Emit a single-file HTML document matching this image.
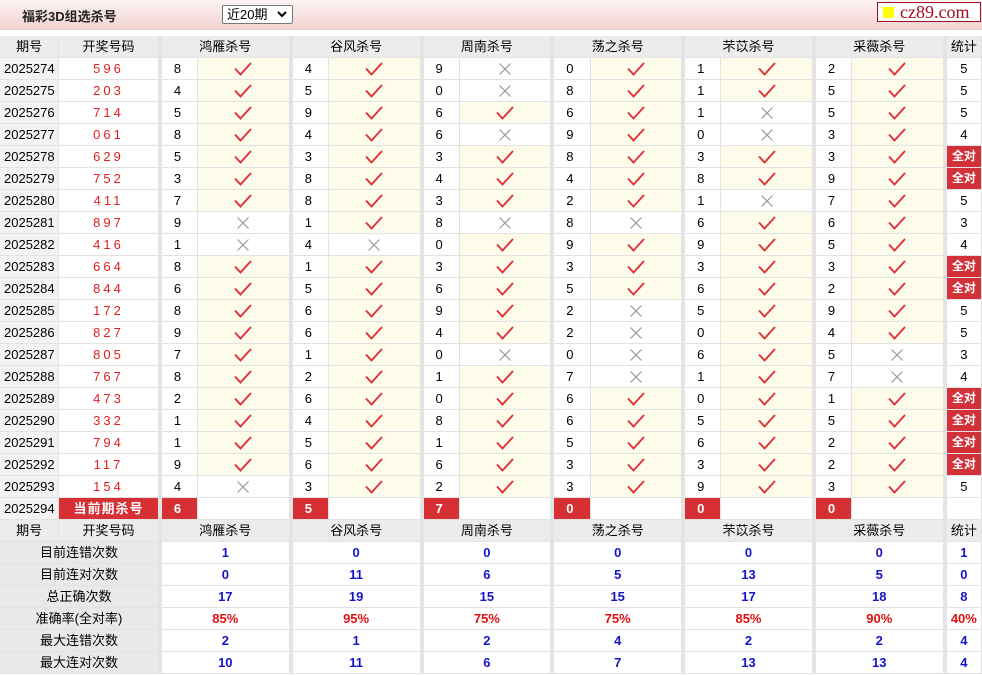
<!DOCTYPE html>
<html><head><meta charset="utf-8">
<style>
*{margin:0;padding:0;box-sizing:border-box}
body{width:982px;height:675px;background:#fff;font-family:"Liberation Sans","Noto Sans CJK SC",sans-serif;font-size:13px;color:#000;position:relative;overflow:hidden}
.top{position:absolute;left:0;top:0;width:982px;height:30px;background:linear-gradient(#fdf4f4,#f3d2d2);border-bottom:1px solid #eccaca}
.title{position:absolute;left:22px;top:6px;font-size:13px;font-weight:bold;color:#222}
.sel{position:absolute;left:222px;top:5px;width:71px;height:19px;border:1px solid #777;background:#fff;font-size:13px;padding-left:4px;line-height:17px;border-radius:2px}
.sel svg{position:absolute;right:5px;top:5px}
.logo{position:absolute;left:877px;top:2px;width:104px;height:20px;border:1px solid #a01020;background:#fff;font-family:"Liberation Serif",serif;font-size:18px;color:#a01020;line-height:18px;padding-left:22px}
.logo i{position:absolute;left:5px;top:4px;width:11px;height:11px;background:#ff0}
table{position:absolute;left:0;top:36px;border-collapse:separate;border-spacing:0;table-layout:fixed;width:982px}
td{height:22px;border-right:1px solid #e2e2e2;border-bottom:1px solid #e2e2e2;text-align:center;padding:0;white-space:nowrap;overflow:hidden;line-height:21px;vertical-align:middle}
td svg{display:block;margin:0 auto}
td.g{border-right:4px solid #e4e4e4}
.h td{background:#ececec}
td.id{background:#f3f3f3;text-align:left;padding-left:4px}
td.dr{color:#e02020;letter-spacing:3px}
td.n{text-align:left;padding-left:12px}
td.c{background:#fdfbea}
td.all{background:#d3313a;color:#fff;font-weight:bold;font-size:12px}
td.red{background:#d63034;color:#fff;font-weight:bold;text-align:left;padding-left:12px}
td.cur{background:#d63034;color:#fff;font-weight:bold;letter-spacing:1px}
td.lb{background:#e9e9e9}
td.b{color:#1515c8;font-weight:bold}
td.r{color:#e01010;font-weight:bold}
</style></head><body>
<div class="top"><div class="title">福彩3D组选杀号</div><div class="sel">近20期<svg width="10" height="7" viewBox="0 0 10 7"><path d="M1 1L5 5L9 1" stroke="#000" stroke-width="2" fill="none"/></svg></div><div class="logo"><i></i>cz89.com</div></div>
<svg width="0" height="0" style="position:absolute"><defs>
<symbol id="k" viewBox="0 0 18 14"><path d="M1 6.5L6.5 12.5L17 1" stroke="#e0303a" stroke-width="1.9" fill="none"/></symbol>
<symbol id="x" viewBox="0 0 14 14"><path d="M1.5 1.5L12.5 12.5M12.5 1.5L1.5 12.5" stroke="#9a9a9a" stroke-width="1.2" fill="none"/></symbol>
</defs></svg>
<table>
<colgroup><col style="width:57px"><col style="width:99px"><col style="width:35px"><col style="width:91px"><col style="width:35px"><col style="width:91px"><col style="width:35px"><col style="width:91px"><col style="width:35px"><col style="width:91px"><col style="width:35px"><col style="width:91px"><col style="width:35px"><col style="width:91px"><col style="width:34px"></colgroup>
<tr class="h"><td>期号</td><td class="g">开奖号码</td><td colspan="2" class="g">鸿雁杀号</td><td colspan="2" class="g">谷风杀号</td><td colspan="2" class="g">周南杀号</td><td colspan="2" class="g">荡之杀号</td><td colspan="2" class="g">芣苡杀号</td><td colspan="2" class="g">采薇杀号</td><td>统计</td></tr>
<tr><td class="id">2025274</td><td class="dr g">596</td><td class="n">8</td><td class="c g"><svg width="18" height="14"><use href="#k"/></svg></td><td class="n">4</td><td class="c g"><svg width="18" height="14"><use href="#k"/></svg></td><td class="n">9</td><td class="g"><svg width="14" height="14"><use href="#x"/></svg></td><td class="n">0</td><td class="c g"><svg width="18" height="14"><use href="#k"/></svg></td><td class="n">1</td><td class="c g"><svg width="18" height="14"><use href="#k"/></svg></td><td class="n">2</td><td class="c g"><svg width="18" height="14"><use href="#k"/></svg></td><td>5</td></tr>
<tr><td class="id">2025275</td><td class="dr g">203</td><td class="n">4</td><td class="c g"><svg width="18" height="14"><use href="#k"/></svg></td><td class="n">5</td><td class="c g"><svg width="18" height="14"><use href="#k"/></svg></td><td class="n">0</td><td class="g"><svg width="14" height="14"><use href="#x"/></svg></td><td class="n">8</td><td class="c g"><svg width="18" height="14"><use href="#k"/></svg></td><td class="n">1</td><td class="c g"><svg width="18" height="14"><use href="#k"/></svg></td><td class="n">5</td><td class="c g"><svg width="18" height="14"><use href="#k"/></svg></td><td>5</td></tr>
<tr><td class="id">2025276</td><td class="dr g">714</td><td class="n">5</td><td class="c g"><svg width="18" height="14"><use href="#k"/></svg></td><td class="n">9</td><td class="c g"><svg width="18" height="14"><use href="#k"/></svg></td><td class="n">6</td><td class="c g"><svg width="18" height="14"><use href="#k"/></svg></td><td class="n">6</td><td class="c g"><svg width="18" height="14"><use href="#k"/></svg></td><td class="n">1</td><td class="g"><svg width="14" height="14"><use href="#x"/></svg></td><td class="n">5</td><td class="c g"><svg width="18" height="14"><use href="#k"/></svg></td><td>5</td></tr>
<tr><td class="id">2025277</td><td class="dr g">061</td><td class="n">8</td><td class="c g"><svg width="18" height="14"><use href="#k"/></svg></td><td class="n">4</td><td class="c g"><svg width="18" height="14"><use href="#k"/></svg></td><td class="n">6</td><td class="g"><svg width="14" height="14"><use href="#x"/></svg></td><td class="n">9</td><td class="c g"><svg width="18" height="14"><use href="#k"/></svg></td><td class="n">0</td><td class="g"><svg width="14" height="14"><use href="#x"/></svg></td><td class="n">3</td><td class="c g"><svg width="18" height="14"><use href="#k"/></svg></td><td>4</td></tr>
<tr><td class="id">2025278</td><td class="dr g">629</td><td class="n">5</td><td class="c g"><svg width="18" height="14"><use href="#k"/></svg></td><td class="n">3</td><td class="c g"><svg width="18" height="14"><use href="#k"/></svg></td><td class="n">3</td><td class="c g"><svg width="18" height="14"><use href="#k"/></svg></td><td class="n">8</td><td class="c g"><svg width="18" height="14"><use href="#k"/></svg></td><td class="n">3</td><td class="c g"><svg width="18" height="14"><use href="#k"/></svg></td><td class="n">3</td><td class="c g"><svg width="18" height="14"><use href="#k"/></svg></td><td class="all">全对</td></tr>
<tr><td class="id">2025279</td><td class="dr g">752</td><td class="n">3</td><td class="c g"><svg width="18" height="14"><use href="#k"/></svg></td><td class="n">8</td><td class="c g"><svg width="18" height="14"><use href="#k"/></svg></td><td class="n">4</td><td class="c g"><svg width="18" height="14"><use href="#k"/></svg></td><td class="n">4</td><td class="c g"><svg width="18" height="14"><use href="#k"/></svg></td><td class="n">8</td><td class="c g"><svg width="18" height="14"><use href="#k"/></svg></td><td class="n">9</td><td class="c g"><svg width="18" height="14"><use href="#k"/></svg></td><td class="all">全对</td></tr>
<tr><td class="id">2025280</td><td class="dr g">411</td><td class="n">7</td><td class="c g"><svg width="18" height="14"><use href="#k"/></svg></td><td class="n">8</td><td class="c g"><svg width="18" height="14"><use href="#k"/></svg></td><td class="n">3</td><td class="c g"><svg width="18" height="14"><use href="#k"/></svg></td><td class="n">2</td><td class="c g"><svg width="18" height="14"><use href="#k"/></svg></td><td class="n">1</td><td class="g"><svg width="14" height="14"><use href="#x"/></svg></td><td class="n">7</td><td class="c g"><svg width="18" height="14"><use href="#k"/></svg></td><td>5</td></tr>
<tr><td class="id">2025281</td><td class="dr g">897</td><td class="n">9</td><td class="g"><svg width="14" height="14"><use href="#x"/></svg></td><td class="n">1</td><td class="c g"><svg width="18" height="14"><use href="#k"/></svg></td><td class="n">8</td><td class="g"><svg width="14" height="14"><use href="#x"/></svg></td><td class="n">8</td><td class="g"><svg width="14" height="14"><use href="#x"/></svg></td><td class="n">6</td><td class="c g"><svg width="18" height="14"><use href="#k"/></svg></td><td class="n">6</td><td class="c g"><svg width="18" height="14"><use href="#k"/></svg></td><td>3</td></tr>
<tr><td class="id">2025282</td><td class="dr g">416</td><td class="n">1</td><td class="g"><svg width="14" height="14"><use href="#x"/></svg></td><td class="n">4</td><td class="g"><svg width="14" height="14"><use href="#x"/></svg></td><td class="n">0</td><td class="c g"><svg width="18" height="14"><use href="#k"/></svg></td><td class="n">9</td><td class="c g"><svg width="18" height="14"><use href="#k"/></svg></td><td class="n">9</td><td class="c g"><svg width="18" height="14"><use href="#k"/></svg></td><td class="n">5</td><td class="c g"><svg width="18" height="14"><use href="#k"/></svg></td><td>4</td></tr>
<tr><td class="id">2025283</td><td class="dr g">664</td><td class="n">8</td><td class="c g"><svg width="18" height="14"><use href="#k"/></svg></td><td class="n">1</td><td class="c g"><svg width="18" height="14"><use href="#k"/></svg></td><td class="n">3</td><td class="c g"><svg width="18" height="14"><use href="#k"/></svg></td><td class="n">3</td><td class="c g"><svg width="18" height="14"><use href="#k"/></svg></td><td class="n">3</td><td class="c g"><svg width="18" height="14"><use href="#k"/></svg></td><td class="n">3</td><td class="c g"><svg width="18" height="14"><use href="#k"/></svg></td><td class="all">全对</td></tr>
<tr><td class="id">2025284</td><td class="dr g">844</td><td class="n">6</td><td class="c g"><svg width="18" height="14"><use href="#k"/></svg></td><td class="n">5</td><td class="c g"><svg width="18" height="14"><use href="#k"/></svg></td><td class="n">6</td><td class="c g"><svg width="18" height="14"><use href="#k"/></svg></td><td class="n">5</td><td class="c g"><svg width="18" height="14"><use href="#k"/></svg></td><td class="n">6</td><td class="c g"><svg width="18" height="14"><use href="#k"/></svg></td><td class="n">2</td><td class="c g"><svg width="18" height="14"><use href="#k"/></svg></td><td class="all">全对</td></tr>
<tr><td class="id">2025285</td><td class="dr g">172</td><td class="n">8</td><td class="c g"><svg width="18" height="14"><use href="#k"/></svg></td><td class="n">6</td><td class="c g"><svg width="18" height="14"><use href="#k"/></svg></td><td class="n">9</td><td class="c g"><svg width="18" height="14"><use href="#k"/></svg></td><td class="n">2</td><td class="g"><svg width="14" height="14"><use href="#x"/></svg></td><td class="n">5</td><td class="c g"><svg width="18" height="14"><use href="#k"/></svg></td><td class="n">9</td><td class="c g"><svg width="18" height="14"><use href="#k"/></svg></td><td>5</td></tr>
<tr><td class="id">2025286</td><td class="dr g">827</td><td class="n">9</td><td class="c g"><svg width="18" height="14"><use href="#k"/></svg></td><td class="n">6</td><td class="c g"><svg width="18" height="14"><use href="#k"/></svg></td><td class="n">4</td><td class="c g"><svg width="18" height="14"><use href="#k"/></svg></td><td class="n">2</td><td class="g"><svg width="14" height="14"><use href="#x"/></svg></td><td class="n">0</td><td class="c g"><svg width="18" height="14"><use href="#k"/></svg></td><td class="n">4</td><td class="c g"><svg width="18" height="14"><use href="#k"/></svg></td><td>5</td></tr>
<tr><td class="id">2025287</td><td class="dr g">805</td><td class="n">7</td><td class="c g"><svg width="18" height="14"><use href="#k"/></svg></td><td class="n">1</td><td class="c g"><svg width="18" height="14"><use href="#k"/></svg></td><td class="n">0</td><td class="g"><svg width="14" height="14"><use href="#x"/></svg></td><td class="n">0</td><td class="g"><svg width="14" height="14"><use href="#x"/></svg></td><td class="n">6</td><td class="c g"><svg width="18" height="14"><use href="#k"/></svg></td><td class="n">5</td><td class="g"><svg width="14" height="14"><use href="#x"/></svg></td><td>3</td></tr>
<tr><td class="id">2025288</td><td class="dr g">767</td><td class="n">8</td><td class="c g"><svg width="18" height="14"><use href="#k"/></svg></td><td class="n">2</td><td class="c g"><svg width="18" height="14"><use href="#k"/></svg></td><td class="n">1</td><td class="c g"><svg width="18" height="14"><use href="#k"/></svg></td><td class="n">7</td><td class="g"><svg width="14" height="14"><use href="#x"/></svg></td><td class="n">1</td><td class="c g"><svg width="18" height="14"><use href="#k"/></svg></td><td class="n">7</td><td class="g"><svg width="14" height="14"><use href="#x"/></svg></td><td>4</td></tr>
<tr><td class="id">2025289</td><td class="dr g">473</td><td class="n">2</td><td class="c g"><svg width="18" height="14"><use href="#k"/></svg></td><td class="n">6</td><td class="c g"><svg width="18" height="14"><use href="#k"/></svg></td><td class="n">0</td><td class="c g"><svg width="18" height="14"><use href="#k"/></svg></td><td class="n">6</td><td class="c g"><svg width="18" height="14"><use href="#k"/></svg></td><td class="n">0</td><td class="c g"><svg width="18" height="14"><use href="#k"/></svg></td><td class="n">1</td><td class="c g"><svg width="18" height="14"><use href="#k"/></svg></td><td class="all">全对</td></tr>
<tr><td class="id">2025290</td><td class="dr g">332</td><td class="n">1</td><td class="c g"><svg width="18" height="14"><use href="#k"/></svg></td><td class="n">4</td><td class="c g"><svg width="18" height="14"><use href="#k"/></svg></td><td class="n">8</td><td class="c g"><svg width="18" height="14"><use href="#k"/></svg></td><td class="n">6</td><td class="c g"><svg width="18" height="14"><use href="#k"/></svg></td><td class="n">5</td><td class="c g"><svg width="18" height="14"><use href="#k"/></svg></td><td class="n">5</td><td class="c g"><svg width="18" height="14"><use href="#k"/></svg></td><td class="all">全对</td></tr>
<tr><td class="id">2025291</td><td class="dr g">794</td><td class="n">1</td><td class="c g"><svg width="18" height="14"><use href="#k"/></svg></td><td class="n">5</td><td class="c g"><svg width="18" height="14"><use href="#k"/></svg></td><td class="n">1</td><td class="c g"><svg width="18" height="14"><use href="#k"/></svg></td><td class="n">5</td><td class="c g"><svg width="18" height="14"><use href="#k"/></svg></td><td class="n">6</td><td class="c g"><svg width="18" height="14"><use href="#k"/></svg></td><td class="n">2</td><td class="c g"><svg width="18" height="14"><use href="#k"/></svg></td><td class="all">全对</td></tr>
<tr><td class="id">2025292</td><td class="dr g">117</td><td class="n">9</td><td class="c g"><svg width="18" height="14"><use href="#k"/></svg></td><td class="n">6</td><td class="c g"><svg width="18" height="14"><use href="#k"/></svg></td><td class="n">6</td><td class="c g"><svg width="18" height="14"><use href="#k"/></svg></td><td class="n">3</td><td class="c g"><svg width="18" height="14"><use href="#k"/></svg></td><td class="n">3</td><td class="c g"><svg width="18" height="14"><use href="#k"/></svg></td><td class="n">2</td><td class="c g"><svg width="18" height="14"><use href="#k"/></svg></td><td class="all">全对</td></tr>
<tr><td class="id">2025293</td><td class="dr g">154</td><td class="n">4</td><td class="g"><svg width="14" height="14"><use href="#x"/></svg></td><td class="n">3</td><td class="c g"><svg width="18" height="14"><use href="#k"/></svg></td><td class="n">2</td><td class="c g"><svg width="18" height="14"><use href="#k"/></svg></td><td class="n">3</td><td class="c g"><svg width="18" height="14"><use href="#k"/></svg></td><td class="n">9</td><td class="c g"><svg width="18" height="14"><use href="#k"/></svg></td><td class="n">3</td><td class="c g"><svg width="18" height="14"><use href="#k"/></svg></td><td>5</td></tr>
<tr><td class="id">2025294</td><td class="cur g">当前期杀号</td><td class="red">6</td><td class="g"></td><td class="red">5</td><td class="g"></td><td class="red">7</td><td class="g"></td><td class="red">0</td><td class="g"></td><td class="red">0</td><td class="g"></td><td class="red">0</td><td class="g"></td><td></td></tr>
<tr class="h"><td>期号</td><td class="g">开奖号码</td><td colspan="2" class="g">鸿雁杀号</td><td colspan="2" class="g">谷风杀号</td><td colspan="2" class="g">周南杀号</td><td colspan="2" class="g">荡之杀号</td><td colspan="2" class="g">芣苡杀号</td><td colspan="2" class="g">采薇杀号</td><td>统计</td></tr>
<tr><td colspan="2" class="lb g">目前连错次数</td><td colspan="2" class="b g">1</td><td colspan="2" class="b g">0</td><td colspan="2" class="b g">0</td><td colspan="2" class="b g">0</td><td colspan="2" class="b g">0</td><td colspan="2" class="b g">0</td><td class="b">1</td></tr>
<tr><td colspan="2" class="lb g">目前连对次数</td><td colspan="2" class="b g">0</td><td colspan="2" class="b g">11</td><td colspan="2" class="b g">6</td><td colspan="2" class="b g">5</td><td colspan="2" class="b g">13</td><td colspan="2" class="b g">5</td><td class="b">0</td></tr>
<tr><td colspan="2" class="lb g">总正确次数</td><td colspan="2" class="b g">17</td><td colspan="2" class="b g">19</td><td colspan="2" class="b g">15</td><td colspan="2" class="b g">15</td><td colspan="2" class="b g">17</td><td colspan="2" class="b g">18</td><td class="b">8</td></tr>
<tr><td colspan="2" class="lb g">准确率(全对率)</td><td colspan="2" class="r g">85%</td><td colspan="2" class="r g">95%</td><td colspan="2" class="r g">75%</td><td colspan="2" class="r g">75%</td><td colspan="2" class="r g">85%</td><td colspan="2" class="r g">90%</td><td class="r">40%</td></tr>
<tr><td colspan="2" class="lb g">最大连错次数</td><td colspan="2" class="b g">2</td><td colspan="2" class="b g">1</td><td colspan="2" class="b g">2</td><td colspan="2" class="b g">4</td><td colspan="2" class="b g">2</td><td colspan="2" class="b g">2</td><td class="b">4</td></tr>
<tr><td colspan="2" class="lb g">最大连对次数</td><td colspan="2" class="b g">10</td><td colspan="2" class="b g">11</td><td colspan="2" class="b g">6</td><td colspan="2" class="b g">7</td><td colspan="2" class="b g">13</td><td colspan="2" class="b g">13</td><td class="b">4</td></tr>
</table>
</body></html>
